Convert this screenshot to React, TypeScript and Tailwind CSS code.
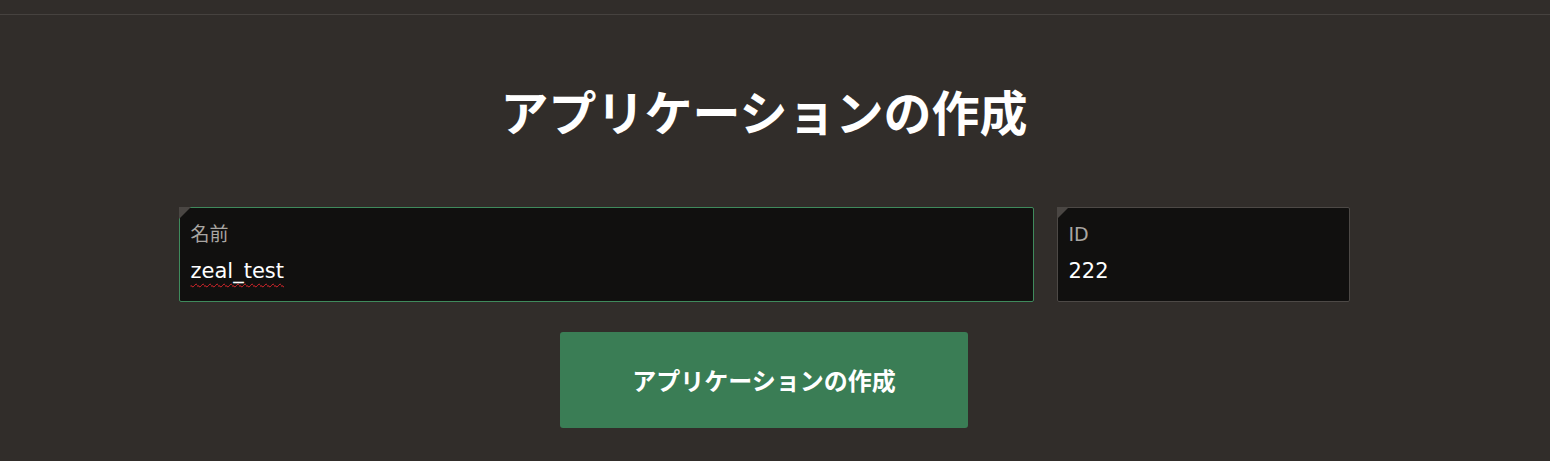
import React from "react";

const jp = { fontFamily: '"Noto Sans CJK JP", "Noto Sans", sans-serif' };
const field = { fontFamily: '"DejaVu Sans", "Noto Sans CJK JP", sans-serif' };

function Field({ label, value, boxClass, spell }: { label: string; value: string; boxClass: string; spell?: boolean }) {
  return (
    <div className={`relative h-[95px] rounded-[2px] bg-[#11100f] px-[11px] pt-[14px] ${boxClass}`}>
      <div className="absolute -left-px -top-px h-0 w-0 border-t-[12px] border-r-[12px] border-t-[#4a4643] border-r-transparent" />
      <div className="text-[19px] leading-[24px] text-[#a9a6a2]" style={field}>{label}</div>
      <div
        className={`mt-[12px] text-[21px] leading-[26px] text-white ${spell ? "underline decoration-wavy decoration-[#e0262b] decoration-1 underline-offset-[5px]" : ""}`}
        style={field}
      >
        {value}
      </div>
    </div>
  );
}

export default function App() {
  return (
    <div className="min-h-[461px] w-full bg-[#312d2a]">
      <div className="h-[15px] border-b border-[#46423f]" />
      <div className="flex w-[1528px] flex-col items-center">
        <h1 className="mt-[65px] text-[48px] font-bold leading-[60px] text-white" style={jp}>
          アプリケーションの作成
        </h1>
        <div className="mt-[67px] flex gap-[23px]">
          <Field label="名前" value="zeal_test" boxClass="w-[855px] border border-[#3f8a5c]" spell />
          <Field label="ID" value="222" boxClass="w-[293px] border border-[#4d4946]" />
        </div>
        <button
          className="mt-[30px] flex h-[96px] w-[408px] items-center justify-center rounded-[3px] bg-[#3a7d55] text-[24px] font-bold text-white"
          style={jp}
        >
          アプリケーションの作成
        </button>
      </div>
    </div>
  );
}
